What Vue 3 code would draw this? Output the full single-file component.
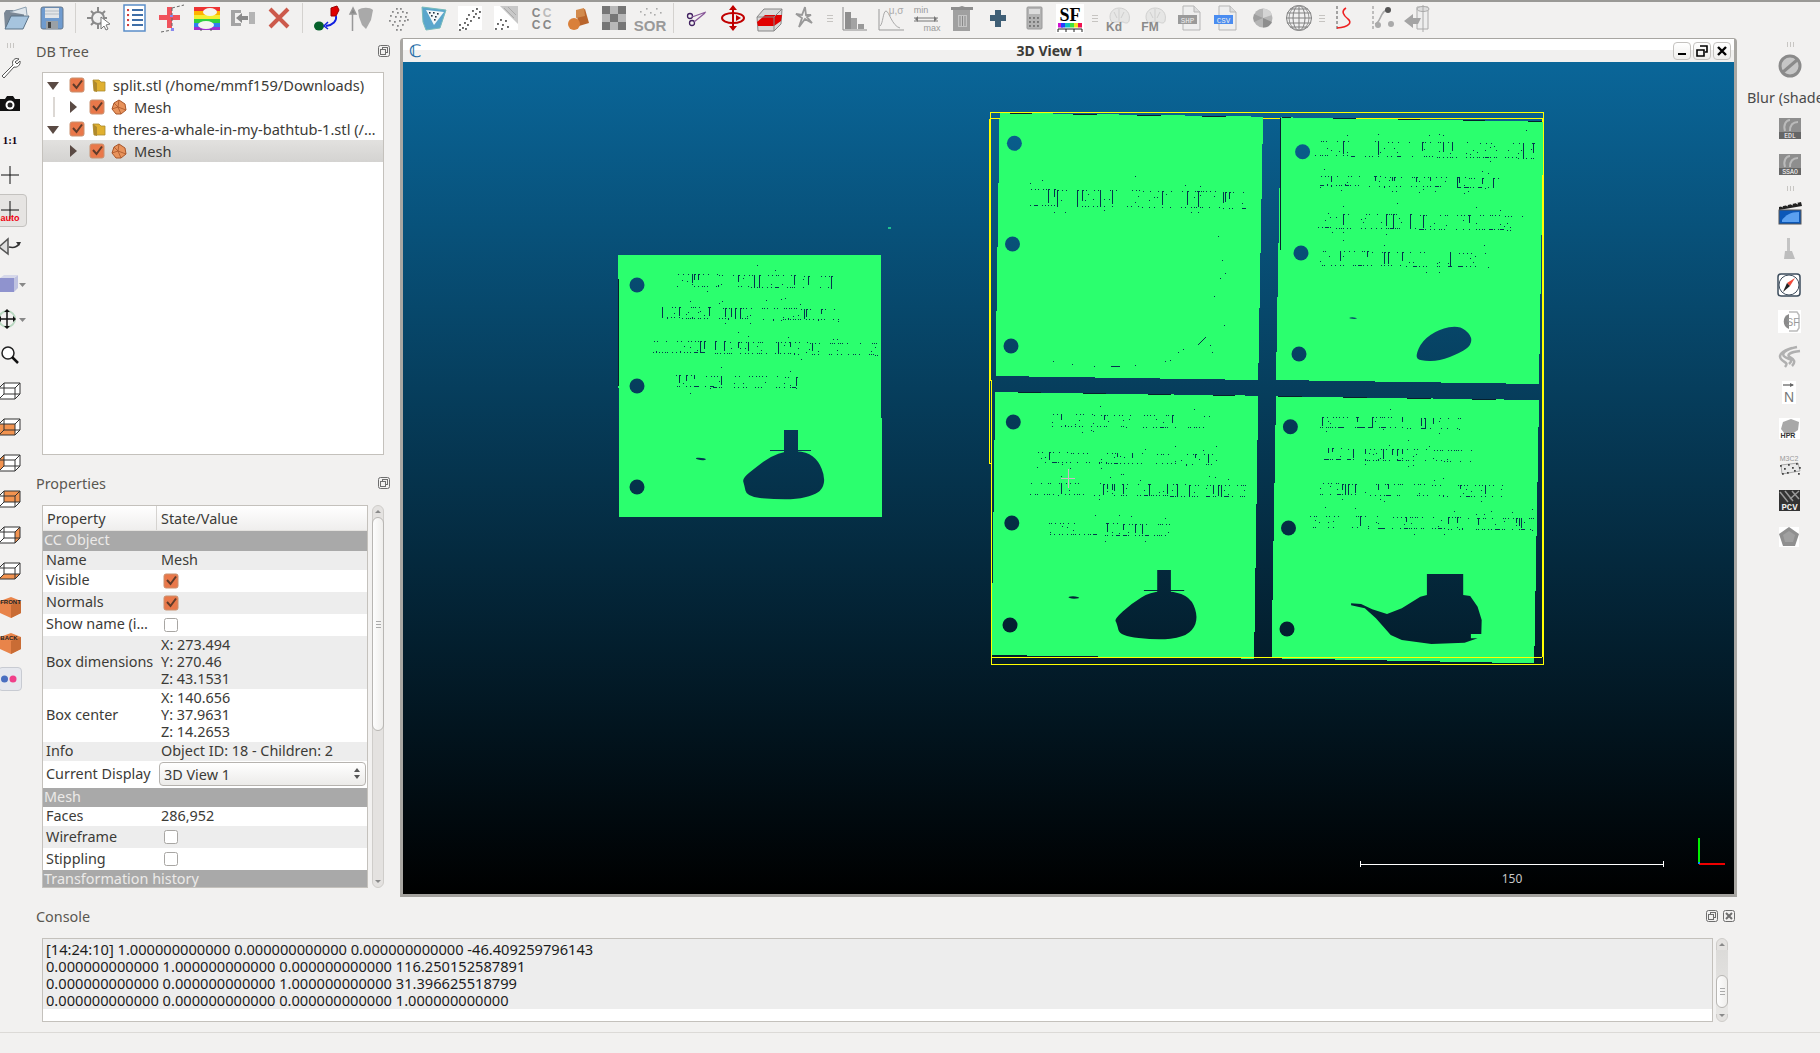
<script setup>
const g = '#8d8d8d'
const t = (x, y, s, c, txt, w = 700, f = 'Liberation Sans') =>
  `<text x="${x}" y="${y}" font-size="${s}" fill="${c}" font-weight="${w}" font-family="${f}" text-anchor="middle">${txt}</text>`
const dots = (arr, c = '#777', r = 1) => arr.map(([x, y]) => `<rect x="${x}" y="${y}" width="${r * 1.6}" height="${r * 1.6}" fill="${c}"/>`).join('')
const brain = `<path d="M6 17C3 11 7 4 14 4s12 5 10 13c-1 3-4 2-6 1H10c-2 1-3 1-4-1z" fill="#e6e6e5" stroke="#d0d0cf" stroke-width="1"/><path d="M14 5v12M9 8l3 6M19 8l-3 6" stroke="#cfcfce" fill="none"/>`
const doc = (label, bg) => `<path d="M6 2h11l6 6v18H6z" fill="#eeeeee" stroke="#b5b5b5"/><path d="M17 2v6h6" fill="#ddd" stroke="#b5b5b5"/><rect x="1" y="11" width="19" height="9" fill="${bg}"/>` + t(10.5, 18.5, 7.5, '#eee', label, 400, 'Liberation Mono')

const topGroups = [
  { sep: 'line', icons: [
    `<path d="M3 24L2 9l2-3h7l2 2h8l1 2v3z" fill="#7b8896"/><path d="M3 25l6-13h18l-6 13z" fill="#a6c4de" stroke="#5b7387"/><path d="M8 8L24 3l1 8" fill="#dfe6ec" stroke="#8da0b0"/>`,
    `<rect x="3" y="3" width="22" height="22" rx="2" fill="#6f9bcf" stroke="#66788c"/><rect x="7" y="4" width="14" height="10" fill="#e2e5e8"/><path d="M7 7h14M7 10h14" stroke="#b4bcc4"/><rect x="8" y="17" width="12" height="8" fill="#9aa0a6"/><rect x="10" y="18" width="3" height="6" fill="#444"/>`,
  ]},
  { sep: 'line', icons: [
    `<circle cx="13" cy="14" r="6" fill="#f0f0f0" stroke="#8a8a8a" stroke-width="2"/><path d="M13 3v6M13 19v6M2 14h6M18 14h4M6 7l3 3M20 7l-3 3M6 21l3-3" stroke="#8a8a8a" stroke-width="2"/><path d="M16 13l9 7-4 1 2 4-2 1-2-4-3 3z" fill="#fff" stroke="#777"/>`,
    `<rect x="3" y="1" width="21" height="26" fill="#fff" stroke="#5a8dc8" stroke-width="1.5"/><path d="M11 6h11M11 11h11M11 16h11M11 21h11" stroke="#3f6fa8" stroke-width="2"/>${dots([[6, 5], [6, 10], [6, 15], [6, 20]], '#d04040', 1.3)}`,
    `<path d="M10 3h5v8h8v5h-8v8h-5v-8H2v-5h8z" fill="#f0525c"/><path d="M15 4l12-3M15 4v24M4 28l11-2" stroke="#666" stroke-dasharray="3 2" fill="none"/><rect x="13" y="11" width="3" height="2" fill="#8888ee"/><rect x="14" y="24" width="3" height="3" fill="#8888ee"/>`,
    `<rect x="1" y="3" width="26" height="4" fill="#ee3333"/><rect x="1" y="7" width="26" height="4" fill="#ffb300"/><rect x="1" y="11" width="26" height="4" fill="#f4ee30"/><rect x="1" y="15" width="26" height="4" fill="#30d040"/><rect x="1" y="19" width="26" height="4" fill="#3080f0"/><rect x="1" y="23" width="26" height="3" fill="#a030d0"/><ellipse cx="17" cy="8" rx="7" ry="4" fill="#f4f4f0"/><ellipse cx="13" cy="21" rx="8" ry="4" fill="#f4f4f0"/><path d="M8 25v2M18 25v2" stroke="#555"/>`,
    `<path d="M2 6h10v3H6v10h6v3H2z" fill="#a4a4a4"/><path d="M7 14l6-5v3h6v4h-6v3z" fill="#8a8a8a"/><rect x="20" y="8" width="6" height="12" fill="#b4b4b4"/>`,
    `<path d="M5 5l18 18M23 5L5 23" stroke="#cc5a4c" stroke-width="4"/>`,
  ]},
  { sep: 'line', icons: [
    `<path d="M19 4l6-2 2 4-3 6h-5z" fill="#e00000" stroke="#900"/><ellipse cx="7" cy="22" rx="5" ry="4.5" fill="#05602a"/><path d="M24 12c1 5-3 9-10 10" stroke="#1020e0" stroke-width="1.8" fill="none"/><path d="M16 18l-4 4 4 3" stroke="#1020e0" stroke-width="1.5" fill="none"/>`,
    `<path d="M5 4l-3 6h6zM4.500 9v18" stroke="#999" fill="#888" stroke-width="1.500"/><path d="M10 6c4-3 12-3 15 0l-2 10-5 9-4-4-3-8z" fill="#a9a9a9"/>`,
    dots([[12, 4], [16, 4], [8, 7], [13, 8], [18, 7], [22, 8], [6, 11], [11, 12], [16, 12], [21, 12], [5, 16], [10, 17], [15, 16], [20, 16], [23, 15], [8, 20], [13, 21], [18, 20], [12, 25], [16, 25]], '#888', 1.1),
    `<path d="M2 3l24 3-6 18-14 2-3-8z" fill="#5aa6cc" stroke="#7bb"/><path d="M6 6l18 2-10 13z" fill="#f2f6f8"/>` + dots([[9, 8], [13, 8], [17, 9], [11, 11], [15, 12], [14, 15]], '#234', 1),
    `<rect x="2" y="2" width="24" height="24" fill="#fff"/>` + dots([[20, 4], [16, 6], [23, 7], [19, 9], [12, 10], [17, 12], [22, 13], [10, 14], [14, 16], [8, 18], [3, 20], [11, 20], [6, 23], [3, 25], [9, 24]], '#666', 1.2),
    `<rect x="2" y="2" width="24" height="24" fill="#fff"/><path d="M8 2h18v18z" fill="#c8c8c8"/><path d="M12 4l10 10M16 3l8 8" stroke="#aaa"/>` + dots([[8, 15], [13, 16], [5, 19], [10, 20], [3, 24], [9, 24], [15, 22]], '#666', 1.2),
    `<text x="8" y="13" font-size="12" font-weight="700" fill="#888" text-anchor="middle" font-family="Liberation Sans">C</text><text x="19" y="13" font-size="12" font-weight="700" fill="#bbb" text-anchor="middle" font-family="Liberation Sans">C</text>` + t(8, 25, 12, '#888', 'C') + t(19, 25, 12, '#888', 'C'),
    `<path d="M12 8l9-3 4 14-10 3z" fill="#b9652c"/><circle cx="10" cy="20" r="6" fill="#d9803a"/><path d="M12 6l8-2 1 8-9 2z" fill="#d28a4c"/>`,
    `<rect x="2" y="2" width="24" height="24" fill="#b8b8b8"/><rect x="2" y="2" width="8" height="8" fill="#767676"/><rect x="18" y="2" width="8" height="8" fill="#767676"/><rect x="10" y="10" width="8" height="8" fill="#767676"/><rect x="2" y="18" width="8" height="8" fill="#767676"/><rect x="18" y="18" width="8" height="8" fill="#767676"/>`,
    t(14, 27, 15, '#999', 'SOR') + dots([[4, 7], [10, 4], [14, 8], [20, 4], [24, 8], [8, 10], [18, 10]], '#aaa', 1),
  ]},
  { sep: 'hnd', icons: [
    `<circle cx="7" cy="12" r="2.500" fill="none" stroke="#402060" stroke-width="1.300"/><circle cx="9" cy="19" r="2.500" fill="none" stroke="#402060" stroke-width="1.300"/><path d="M9 13l14-5M11 18l11-9" stroke="#8a5a9a" stroke-width="1.300"/>`,
    `<path d="M14 2v24" stroke="#c00000" stroke-width="2"/><path d="M14 1l-4 5h8zM14 27l-4-5h8z" fill="#c00000"/><ellipse cx="14" cy="14" rx="11" ry="5" fill="none" stroke="#c00000" stroke-width="2"/><path d="M17 11l5 3-5 3z" fill="#c00000"/>`,
    `<path d="M2 13l7-8h18l-1 15-7 7H3z" fill="#d8d8d8" stroke="#888"/><path d="M2 18l8-7h17l-1 6-7 5H3z" fill="#e10000"/><path d="M19 27V13H2M19 13l8-8" stroke="#888" fill="none"/>`,
    `<path d="M14 3l-3 8 -6-1 6 4-3 9 6-8 7 4-5-6 4-2h-5z" fill="none" stroke="#999" stroke-width="1.800"/>`,
  ]},
  { sep: 'hnd2', icons: [
    `<path d="M3 3v23h24" stroke="#8a8a8a" fill="none"/><rect x="5" y="8" width="6" height="17" fill="#8f8f8f"/><rect x="11" y="14" width="6" height="11" fill="#a3a3a3"/><rect x="18" y="20" width="6" height="5" fill="#999"/>`,
    `<path d="M3 5v21h25" stroke="#999" fill="none"/><path d="M4 22c3-2 3-15 6-15s6 15 14 17" stroke="#aaa" fill="none"/><text x="20" y="10" font-size="10" fill="#aaa" text-anchor="middle" font-family="Liberation Sans">μ,σ</text>`,
    `<text x="9" y="9" font-size="9" fill="#999" text-anchor="middle" font-family="Liberation Sans">min</text><path d="M2 14h24M2 17h24" stroke="#777"/><path d="M6 12l-3 3 3 3zM22 12l3 3-3 3z" fill="#777"/><text x="20" y="27" font-size="9" fill="#999" text-anchor="middle" font-family="Liberation Sans">max</text>`,
    `<path d="M5 6h17v21H5z" fill="#a0a0a0"/><path d="M3 3h8l3-1 3 1h8v3H3z" fill="#8e8e8e"/><rect x="10" y="11" width="9" height="12" fill="#c4c4c4"/><path d="M12 12v10M14.500 12v10M17 12v10" stroke="#888"/>`,
    `<path d="M11 6h6v5h5v6h-5v6h-6v-6H6v-6h5z" fill="#3f5f76"/>`,
    `<rect x="7" y="3" width="15" height="22" rx="1" fill="#b3b3b3" stroke="#999"/><rect x="9" y="5" width="11" height="5" fill="#dcdcdc"/>` + dots([[9, 13], [13, 13], [17, 13], [9, 17], [13, 17], [17, 17], [9, 21], [13, 21], [17, 21]], '#777', 1.200),
    `<rect x="0" y="0" width="28" height="29" fill="#fff"/><text x="14" y="17" font-size="18" font-weight="700" fill="#000" text-anchor="middle" font-family="Liberation Serif">SF</text><rect x="2" y="19" width="5" height="4.500" fill="#d010d0"/><rect x="5" y="19" width="4" height="4.500" fill="#2040ff"/><rect x="9" y="19" width="5" height="4.500" fill="#10c0c0"/><rect x="14" y="19" width="4" height="4.500" fill="#40e040"/><rect x="18" y="19" width="4" height="4.500" fill="#f0e020"/><rect x="22" y="19" width="4" height="4.500" fill="#f01050"/><path d="M2 28v-3h24v3M10 25v3M18 25v3" stroke="#222" fill="none"/>`,
  ]},
  { sep: 'hnd3', icons: [
    brain + t(9, 27, 12, '#8a8a8a', 'Kd'),
    brain + t(9, 27, 12, '#8a8a8a', 'FM'),
    doc('SHP', '#9a9a9a'),
    doc('CSV', '#4a8cf0'),
    `<circle cx="14" cy="14" r="9.500" fill="#b5b5b5"/><path d="M14 14L14 4.500A9.500 9.500 0 0 1 23 11z" fill="#d4d4d4"/><path d="M14 14L23 18A9.500 9.500 0 0 1 14 23.500z" fill="#8e8e8e"/><path d="M14 14L5 10A9.500 9.500 0 0 0 5 18z" fill="#9e9e9e"/>`,
    `<circle cx="14" cy="14" r="12.500" fill="#f0f0f0" stroke="#808080"/><ellipse cx="14" cy="14" rx="6" ry="12.500" fill="none" stroke="#808080"/><ellipse cx="14" cy="14" rx="10" ry="12.500" fill="none" stroke="#999"/><path d="M14 1.500v25M2 9h24M1.500 14h25M2 19h24M5 5h18M5 23h18" stroke="#808080" fill="none"/>`,
  ]},
  { sep: '', icons: [
    `<path d="M6 2v25" stroke="#555" stroke-dasharray="3 2"/><path d="M15 4c-5 3-3 7 2 11 4 3 2 8-11 9" stroke="#ee2020" stroke-width="1.600" fill="none"/>`,
    `<path d="M6 2v25" stroke="#888" stroke-dasharray="3 2"/><path d="M8 20c6-1 5-14 14-15" stroke="#aaa" stroke-width="1.500" fill="none"/><circle cx="21" cy="6" r="3" fill="#555"/><circle cx="11" cy="21" r="3" fill="#aaa"/><circle cx="24" cy="20" r="3" fill="#aaa"/>`,
    `<path d="M14 3h11v22H14z" fill="#eee" stroke="#aaa"/><ellipse cx="20" cy="5" rx="6" ry="2.500" fill="#ddd" stroke="#aaa"/><path d="M20 1v27" stroke="#aaa"/><path d="M1 17l9-7v4h8l-3 6h-5v4z" fill="#a4a4a4"/>`,
  ]},
]

const cube = (face) => `<path d="M1 9l5-5h16v11l-5 5H1z" fill="#fff"/>${face}<path d="M1 9h16v11H1zM1 9l5-5h16v11l-5 5M17 9l5-5M1 20l5-5h16M6 4v11" fill="none" stroke="#333" stroke-width="1"/>`
const orange = '#f29350'
const leftIcons = [
  `<path d="M4 21l11-11c-2-4 2-8 6-6l-4 3 2 2 3-3c1 4-3 7-6 6L6 23z" fill="#fff" stroke="#555"/>`,
  `<path d="M2 8h5l2-3h6l2 3h5v12H2z" fill="#111"/><circle cx="12" cy="14" r="4.500" fill="#fff"/><circle cx="12" cy="14" r="2.500" fill="#222"/>`,
  `<text x="12" y="17" font-size="11" font-weight="700" fill="#101" text-anchor="middle" font-family="Liberation Serif">1:1</text>`,
  `<path d="M12 3v18M3 12h18" stroke="#111"/>`,
  `<path d="M12 2v18M3 11h18" stroke="#111"/>` + `<text x="12" y="22" font-size="9" font-weight="700" fill="#f00010" text-anchor="middle" font-family="Liberation Sans">auto</text>`,
  `<path d="M10 4v15L1 12z" fill="#ddd" stroke="#555" stroke-width="1.500"/><path d="M11 12c4 1 8 0 10-3" stroke="#333" stroke-width="1.500" fill="none"/><path d="M18 7l5 0-2 4z" fill="#333"/>`,
  `<path d="M2 7h14v14H2z" fill="#8f93ce"/><path d="M16 7l4-3v13l-4 4z" fill="#bfc2e0"/><path d="M2 7l4-3h14l-4 3z" fill="#d6d8ea"/><path d="M21 12h7l-3.500 4z" fill="#888"/>`,
  `<circle cx="9" cy="12" r="8" fill="none" stroke="#b8d8c0" stroke-width="2"/><path d="M9 3v18M1 12h16" stroke="#111" stroke-width="1.500"/><path d="M9 2l-3 3h6zM9 22l-3-3h6zM0 12l3-3v6zM18 12l-3-3v6z" fill="#111"/><path d="M21 11h7l-3.500 4z" fill="#888"/>`,
  `<circle cx="10" cy="10" r="6" fill="#fff" stroke="#222" stroke-width="1.500"/><path d="M14 14l6 6" stroke="#111" stroke-width="2.500"/>`,
  cube(''),
  cube(`<rect x="1" y="9" width="16" height="11" fill="${orange}"/>`),
  cube(`<path d="M1 9l5-5v11l-5 5z" fill="${orange}"/>`),
  cube(`<rect x="6" y="4" width="16" height="11" fill="${orange}"/>`),
  cube(`<path d="M17 9l5-5v11l-5 5z" fill="${orange}"/>`),
  cube(`<path d="M1 20l5-5h16l-5 5z" fill="${orange}"/>`),
  `<path d="M2 6l11-4 10 4v12l-10 5-11-5z" fill="#e8844a"/><path d="M13 10v13l10-5V6z" fill="#c96c35"/><text x="12.500" y="9" font-size="6" font-weight="700" fill="#222" text-anchor="middle" font-family="Liberation Sans">FRONT</text>`,
  `<path d="M2 6l11-4 10 4v12l-10 5-11-5z" fill="#e8844a"/><path d="M13 10v13l10-5V6z" fill="#c96c35"/><text x="11" y="9" font-size="6" font-weight="700" fill="#222" text-anchor="middle" font-family="Liberation Sans">BACK</text>`,
  `<circle cx="6.500" cy="12" r="3.500" fill="#4a6fc0"/><circle cx="15" cy="12" r="3.500" fill="#f0408a"/>`,
]

const shaderTile = (label, c = '#fff', bg = '#8e8e8e') => `<rect x="2" y="1" width="22" height="21" fill="${bg}"/><path d="M8 14C6 8 9 3 13 3M13 14c0-6 3-9 8-9" stroke="#bbb" stroke-width="2" fill="none"/><rect x="2" y="15" width="22" height="7" fill="#666"/><text x="13" y="21" font-size="6.500" fill="${c}" text-anchor="middle" font-family="Liberation Mono">${label}</text>`
const rightIcons = [
  { cls: 'rtop', svg: `<circle cx="13" cy="12" r="10" fill="#c6c6c6" stroke="#8a8a8a" stroke-width="3"/><path d="M6 18L20 6" stroke="#8a8a8a" stroke-width="3"/>` },
  { text: 'Blur (shader)' },
  { svg: shaderTile('EDL') },
  { svg: shaderTile('SSAO') },
  { hnd: true },
  { svg: `<path d="M2 6l22-5 1 4L2 9z" fill="#222"/><path d="M4 5l2 1M9 4l2 1M14 3l2 1M19 2l2 1" stroke="#eee"/><rect x="2" y="9" width="22" height="14" fill="#0c58b8"/><path d="M5 19c4-5 8-8 17-8v10H5z" fill="#5aa0f0"/><rect x="2" y="9" width="22" height="14" fill="none" stroke="#555"/>` },
  { svg: `<rect x="10" y="1" width="3" height="14" fill="#c4c4c4"/><path d="M8 14h7l3 8H7z" fill="#bdbdbd"/>` },
  { svg: `<rect x="1" y="1" width="22" height="22" rx="3" fill="#fff" stroke="#3c4c5c" stroke-width="1.500"/><circle cx="12" cy="12" r="10" fill="#fff" stroke="#3c4c5c"/><path d="M18 5l-5 8-3-3z" fill="#f04a3a"/><path d="M6 19l4-9 3 3z" fill="#222"/>` },
  { svg: `<rect x="1" y="1" width="23" height="23" fill="#fff"/><path d="M12 5a8 8 0 0 0 0 15z" fill="#8a8a8a"/><path d="M12 3h8l2 3v13l-2 3h-8" fill="none" stroke="#bbb" stroke-width="1.500"/><text x="16" y="17" font-size="10" fill="#999" text-anchor="middle" font-family="Liberation Sans">SF</text>` },
  { svg: `<path d="M20 2C9 4 3 9 8 12s9 2 4 7M23 6C13 7 9 10 13 12s6 5 2 9M15 3C5 6 1 10 4 14s8 3 4 8" fill="none" stroke="#b0b0b0" stroke-width="2.500"/>` },
  { svg: `<rect x="5" y="0" width="14" height="23" fill="#fff"/><path d="M6 4h10" stroke="#666" stroke-width="1.300"/><path d="M13 2l4 2-4 2z" fill="#666"/><text x="12" y="21" font-size="14" fill="#777" text-anchor="middle" font-family="Liberation Sans">N</text>` },
  { svg: `<rect x="2" y="1" width="21" height="21" fill="#fff"/><path d="M6 5l8-3 8 3-1 8-6 4H8l-4-5z" fill="#a8a8a8"/><text x="11" y="21" font-size="7" font-weight="700" fill="#333" text-anchor="middle" font-family="Liberation Sans">HPR</text>` },
  { svg: `<text x="12" y="8" font-size="7" fill="#999" text-anchor="middle" font-family="Liberation Sans">M3C2</text><path d="M4 12l17-2 2 8-18 3z" fill="#e8e8e8" stroke="#aaa"/>` + dots([[3, 12], [7, 15], [11, 11], [15, 14], [19, 10], [22, 14], [5, 20], [10, 19], [17, 17], [21, 20]], '#444', 1.1) },
  { svg: `<rect x="2" y="1" width="21" height="21" fill="#333"/><path d="M3 3l8 10M8 2l8 10M15 2l7 8M22 2l-9 8" stroke="#999" stroke-width="1.500"/><text x="12.500" y="21" font-size="9" font-weight="700" fill="#eee" text-anchor="middle" font-family="Liberation Mono">PCV</text>` },
  { svg: `<rect x="2" y="2" width="20" height="20" fill="#fff"/><path d="M12 2l10 7-4 12H6L2 9z" fill="#8f8f8f"/><path d="M12 6l6 4-2 7H8l-2-7z" fill="#a0a0a0"/>` },
]

const rows = [
  { s: 'CC Object' },
  { k: 'Name', v: 'Mesh', h: 'h19', alt: 1 },
  { k: 'Visible', c: 1, h: 'h22' },
  { k: 'Normals', c: 1, h: 'h22', alt: 1 },
  { k: 'Show name (i…', c: 0, h: 'h22' },
  { k: 'Box dimensions', m: ['X: 273.494', 'Y: 270.46', 'Z: 43.1531'], h: 'h53', alt: 1 },
  { k: 'Box center', m: ['X: 140.656', 'Y: 37.9631', 'Z: 14.2653'], h: 'h53' },
  { k: 'Info', v: 'Object ID: 18 - Children: 2', h: 'h19', alt: 1 },
  { k: 'Current Display', combo: '3D View 1', h: 'h27' },
  { s: 'Mesh' },
  { k: 'Faces', v: '286,952', h: 'h19' },
  { k: 'Wireframe', c: 0, h: 'h22', alt: 1 },
  { k: 'Stippling', c: 0, h: 'h22' },
  { s: 'Transformation history' },
]

const tree = [
  { label: 'split.stl (/home/mmf159/Downloads)', lvl: 0 },
  { label: 'Mesh', lvl: 1, bar: true },
  { label: 'theres-a-whale-in-my-bathtub-1.stl (/…', lvl: 0 },
  { label: 'Mesh', lvl: 1, sel: true },
]

const consoleLines = [
  '[14:24:10] 1.000000000000 0.000000000000 0.000000000000 -46.409259796143',
  '0.000000000000 1.000000000000 0.000000000000 116.250152587891',
  '0.000000000000 0.000000000000 1.000000000000 31.396625518799',
  '0.000000000000 0.000000000000 0.000000000000 1.000000000000',
]

/* --- 3D view geometry, in screen pixels --- */
const pts = (a) => a.map((p) => p.join(',')).join(' ')
const z5 = ([x, y]) => [+(980 + x / 2.703).toFixed(1), +(100 + y / 3).toFixed(1)]
const z6 = ([x, y]) => [+(980 + x / 2.703).toFixed(1), +(380 + y / 3).toFixed(1)]
const z4 = ([x, y]) => [+(600 + x / 3).toFixed(1), +(240 + y / 3).toFixed(1)]

const panels = [
  pts([[618, 255], [881, 255], [881, 418], [882, 418], [882, 517], [619, 517]]),
  pts([[53, 38], [765, 50], [752, 840], [42, 828]].map(z5)),
  pts([[813, 52], [1523, 65], [1511, 852], [800, 840]].map(z5)),
  pts([[41, 36], [752, 47], [741, 836], [31, 825]].map(z6)),
  pts([[800, 49], [1511, 60], [1498, 850], [788, 835]].map(z6)),
]
const holes = [
  [637, 285], [637, 386], [637, 487],
  [1014.4, 143.3], [1012.5, 244], [1011, 346],
  [1302.6, 151.7], [1301, 253], [1299, 354],
  [1013.3, 422], [1011.8, 523], [1010, 625],
  [1290.4, 426.7], [1288.5, 528], [1287, 629],
]
const smooth = (a) => {
  const m = (p, q) => [(p[0] + q[0]) / 2, (p[1] + q[1]) / 2]
  let d = 'M' + m(a[a.length - 1], a[0]).join(' ')
  a.forEach((p, i) => {
    const e = m(p, a[(i + 1) % a.length])
    d += `Q${p[0]} ${p[1]} ${e[0]} ${e[1]}`
  })
  return d + 'Z'
}
const rect = (x0, y0, x1, y1) => `M${x0} ${y0}H${x1}V${y1}H${x0}Z`
const c4 = (x0, y0, x1, y1, f) => {
  const a = f([x0, y0]); const b = f([x1, y1])
  return rect(a[0], a[1], b[0], b[1])
}
const shapes = [
  smooth([[427, 715], [470, 680], [510, 650], [560, 632], [620, 636], [655, 662], [675, 710], [668, 748], [640, 765], [590, 778], [520, 778], [440, 770], [433, 735]].map(z4)),
  c4(552, 570, 594, 640, z4), c4(510, 630, 633, 633, z4),
  smooth([[363, 717], [410, 670], [460, 636], [520, 632], [568, 652], [587, 700], [582, 742], [550, 772], [480, 780], [378, 768], [370, 730]].map(z6)),
  c4(479, 570, 516, 640, z6), c4(443, 630, 552, 633, z6),
  'M' + [[1003, 670], [1030, 672], [1060, 688], [1100, 702], [1140, 685], [1190, 650], [1208, 645], [1208, 582], [1306, 582], [1306, 645], [1325, 648], [1345, 680], [1356, 720], [1355, 762], [1327, 762], [1327, 775], [1345, 775], [1310, 788], [1220, 792], [1140, 780], [1110, 765], [1070, 715], [1040, 685], [1003, 676]].map((p) => z6(p).join(' ')).join('L') + 'Z',
  smooth([[1176, 770], [1195, 722], [1240, 688], [1295, 676], [1328, 705], [1328, 735], [1300, 758], [1240, 784], [1190, 782]].map(z5)),
  smooth([[283, 655], [300, 652], [323, 658], [305, 662]].map(z4)),
  smooth([[235, 651], [255, 648], [273, 654], [250, 657]].map(z6)),
  smooth([[995, 654], [1008, 651], [1022, 656], [1008, 657]].map(z5)),
]

const textLines = [
  [677, 833, 263, 292], [662, 843, 297, 323], [653, 878, 330, 358], [675, 797, 365, 392],
  [1030, 1244, 174, 214],
  [1315, 1537, 127, 163], [1320, 1498, 167, 190], [1318, 1522, 200, 235], [1320, 1489, 238, 272],
  [1052, 1209, 403, 432], [1037, 1219, 443, 467], [1030, 1254, 472, 500], [1048, 1170, 512, 540],
  [1320, 1461, 407, 432], [1324, 1472, 438, 465], [1320, 1505, 473, 500], [1309, 1533, 505, 533],
]
const textPath = (() => {
  let s = 1234567
  const r = () => (s = (s * 16807) % 2147483647) / 2147483647
  let d = ''
  const px = (x, y, w = 1, h = 1) => { d += `M${Math.round(x)} ${Math.round(y)}h${w}v${h}h${-w}z` }
  for (const [x0, x1, y0, y1] of textLines) {
    const h = y1 - y0
    const mid = y0 + h * 0.38
    const base = y0 + h * 0.78
    let x = x0
    let word = 0
    while (x < x1) {
      const slope = (x - x0) * 0.012
      if (r() < 0.72) px(x, base + slope)
      if (r() < 0.62) px(x + 1, mid + slope)
      if (r() < 0.3) px(x, mid + 3 + r() * 9 + slope)
      if (r() < 0.16) px(x, mid + slope, 1, Math.round((base - mid) * (0.4 + r() * 0.7)))
      if (r() < 0.06) px(x, base + slope, 4, 1)
      if (r() < 0.1) px(x, y0 + r() * h * 0.25 + slope)
      if (r() < 0.05) px(x, base + 4 + r() * 3 + slope)
      x += 2 + Math.floor(r() * 3.5)
      word += 1
      if (word > 9 && r() < 0.2) { x += 7; word = 0 }
    }
  }
  ;[[1214, 296], [1225, 273], [1220, 278], [1222, 260], [1218, 236], [1224, 325], [1212, 352], [1210, 345], [1183, 349], [1178, 352], [1170, 360], [1165, 361], [1135, 365], [1094, 366], [1072, 364], [1053, 361]].forEach(([x, y]) => px(x, y))
  px(1111, 366, 9, 1)
  return d
})()

const ticks = [
  ...[[80, 40, 140], [250, 43, 315], [425, 46, 490], [600, 49, 665]].map(([a, y, b]) => [z5([a, y]), z5([b, y])]),
  ...[[815, 53, 840], [955, 55, 1015], [1130, 58, 1190], [1305, 61, 1365], [1480, 64, 1520]].map(([a, y, b]) => [z5([a, y]), z5([b, y])]),
  ...[[103, 38, 165], [278, 40, 340], [455, 43, 515], [630, 46, 690]].map(([a, y, b]) => [z6([a, y]), z6([b, y])]),
  ...[[805, 49, 870], [980, 52, 1045], [1155, 55, 1220], [1330, 58, 1395]].map(([a, y, b]) => [z6([a, y]), z6([b, y])]),
].map(([a, b]) => `M${a[0]} ${a[1]}H${b[0]}`).join('') + 'M618 279V386M1280.500 118V250'
</script>

<template>
  <div class="app">
    <svg class="defs" width="0" height="0" aria-hidden="true">
      <symbol id="chk" viewBox="0 0 16 16">
        <rect x="1" y="1" width="14" height="14" rx="2" fill="#e9784a" stroke="#c9906f" />
        <path d="M4 7l3.500 4L13 3.500" fill="none" stroke="#5f3b2a" stroke-width="2" />
      </symbol>
      <symbol id="unchk" viewBox="0 0 16 16">
        <rect x="1.500" y="1.500" width="13" height="13" rx="2" fill="#fff" stroke="#a8a6a3" />
      </symbol>
      <symbol id="float" viewBox="0 0 12 12">
        <rect x=".5" y=".5" width="11" height="11" rx="2" fill="none" stroke="#6e6e6e" />
        <rect x="4.500" y="2.500" width="5" height="5" fill="none" stroke="#6e6e6e" />
        <rect x="2.500" y="4.500" width="5" height="5" fill="#f2f1f0" stroke="#6e6e6e" />
      </symbol>
      <symbol id="meshi" viewBox="0 0 16 16">
        <path d="M8 1l6 4 1 6-5 4H5L1 10l2-6z" fill="#e8935c" stroke="#a8562a" />
        <path d="M8 1l-1 7-6 2M7 8l3 7M7 8l8 3M7 8l-4-4" stroke="#a8562a" fill="none" stroke-width=".8" />
      </symbol>
      <symbol id="foldr" viewBox="0 0 16 16">
        <path d="M2 3h6l2 2h4v9H3z" fill="#e0b030" stroke="#a88a30" stroke-width=".8" />
        <path d="M2 3l4 3v9l-3-1z" fill="#b08a2c" />
      </symbol>
    </svg>

    <header class="toolbar">
      <template v-for="(grp, gi) in topGroups" :key="gi">
        <span v-for="(ic, ii) in grp.icons" :key="ii" class="tbtn">
          <svg class="ic" viewBox="0 0 28 28" v-html="ic"></svg>
        </span>
        <span v-if="grp.sep === 'line'" class="sep"><i></i></span>
        <span v-else-if="grp.sep" :class="['grip', grp.sep]"><i></i><i></i><i></i></span>
      </template>
    </header>

    <section class="main">
      <aside class="ltb">
        <span class="hgrip"><i></i><i></i><i></i></span>
        <span v-for="(ic, i) in leftIcons" :key="i" :class="['lbtn', { pressed: i === 4 }, { flick: i === 17 }]">
          <svg class="lic" viewBox="0 0 24 24" v-html="ic"></svg>
        </span>
      </aside>

      <div class="docks">
        <div class="dhead dh1">
          <span>DB Tree</span>
          <svg class="fl"><use href="#float" /></svg>
        </div>
        <div class="tree">
          <div v-for="(n, i) in tree" :key="i" :class="['trow', 'l' + n.lvl, { sel: n.sel }]">
            <span v-if="n.bar" class="tbar"></span>
            <span :class="n.lvl ? 'arr-r' : 'arr-d'"></span>
            <svg class="tck"><use href="#chk" /></svg>
            <svg class="tic"><use :href="n.lvl ? '#meshi' : '#foldr'" /></svg>
            <span class="tlabel">{{ n.label }}</span>
          </div>
        </div>

        <div class="dhead dh2">
          <span>Properties</span>
          <svg class="fl"><use href="#float" /></svg>
        </div>
        <div class="propwrap">
          <div class="table">
            <div class="thead"><span class="th1">Property</span><span class="th2">State/Value</span></div>
            <template v-for="(r, i) in rows" :key="i">
              <div v-if="r.s" class="section">{{ r.s }}</div>
              <div v-else :class="['prow', r.h, { alt: r.alt }]">
                <span class="pk">{{ r.k }}</span>
                <span class="pv">
                  <template v-if="r.v">{{ r.v }}</template>
                  <svg v-else-if="r.c !== undefined" class="pck"><use :href="r.c ? '#chk' : '#unchk'" /></svg>
                  <span v-else-if="r.m" class="multi"><span v-for="l in r.m" :key="l">{{ l }}</span></span>
                  <span v-else class="combo">{{ r.combo }}<i class="spin"></i></span>
                </span>
              </div>
            </template>
          </div>
          <div class="sbar tall">
            <i class="up"></i>
            <div class="thumb th-p"><b></b><b></b><b></b></div>
            <i class="dn"></i>
          </div>
        </div>
      </div>

      <div class="win">
        <div class="wtitle">
          <span class="cc">ℂ</span>
          <span class="wname">3D View 1</span>
          <span class="wb"><svg viewBox="0 0 16 16"><path d="M4 11h8" stroke="#000" stroke-width="2" /></svg></span>
          <span class="wb"><svg viewBox="0 0 16 16"><path d="M6 3h7v6h-2M3 7h7v6H3z" fill="none" stroke="#000" stroke-width="1.600" /></svg></span>
          <span class="wb"><svg viewBox="0 0 16 16"><path d="M4 4l8 8M12 4l-8 8" stroke="#000" stroke-width="2.400" /></svg></span>
        </div>
        <div class="gl">
          <svg class="scene" viewBox="403 62 1331 832" width="1331" height="832">
            <defs>
              <linearGradient id="bg" gradientUnits="userSpaceOnUse" x1="0" y1="62" x2="0" y2="894">
                <stop offset="0" stop-color="#0a6699" />
                <stop offset="1" stop-color="#000" />
              </linearGradient>
            </defs>
            <path d="M989.500 118.500H1542V657M989.500 118.500V463H991" fill="none" stroke="#ffff00" shape-rendering="crispEdges" />
            <polygon v-for="(p, i) in panels" :key="i" :points="p" fill="#2bff6e" shape-rendering="crispEdges" />
            <circle v-for="(h, i) in holes" :key="'h' + i" :cx="h[0]" :cy="h[1]" r="7.500" fill="url(#bg)" />
            <path v-for="(s, i) in shapes" :key="'s' + i" :d="s" fill="url(#bg)" />
            <path :d="textPath" fill="#04344e" shape-rendering="crispEdges" />
            <path d="M1198 345L1206 337" stroke="#063048" fill="none" />
            <path :d="ticks" stroke="#06202c" fill="none" shape-rendering="crispEdges" />
            <path d="M1061 478.500h14M1068 469v19" stroke="#cdb9c6" fill="none" shape-rendering="crispEdges" />
            <rect x="888" y="227" width="3" height="2" fill="#1fc090" />
            <path d="M990.500 112.500H1543.500V664H991.500V380H990.500Z M991 657.500H1542" fill="none" stroke="#ffff00" shape-rendering="crispEdges" />
            <path d="M1360.500 864h303M1360.500 861v6M1663.500 861v6" stroke="#fff" fill="none" shape-rendering="crispEdges" />
            <text x="1512" y="883" class="scale">150</text>
            <path d="M1699 864V838" stroke="#00ee00" stroke-width="2" />
            <path d="M1699 864H1725" stroke="#ee0000" stroke-width="2" />
            <rect x="1698" y="862" width="2" height="2" fill="#0090ff" />
          </svg>
        </div>
      </div>

      <aside class="rtb">
        <span class="hgrip"><i></i><i></i><i></i></span>
        <template v-for="(it, i) in rightIcons" :key="i">
          <span v-if="it.hnd" class="hgrip rh"><i></i><i></i><i></i></span>
          <span v-else-if="it.text" class="blur">{{ it.text }}</span>
          <span v-else class="rbtn"><svg class="ric" viewBox="0 0 26 24" v-html="it.svg"></svg></span>
        </template>
      </aside>
    </section>

    <section class="console">
      <div class="dhead chead">
        <span>Console</span>
        <span class="cbtns">
          <svg class="fl"><use href="#float" /></svg>
          <svg class="fl" viewBox="0 0 12 12"><rect x=".5" y=".5" width="11" height="11" rx="2" fill="none" stroke="#6e6e6e" /><path d="M3 3l6 6M9 3l-6 6" stroke="#6e6e6e" stroke-width="2" /></svg>
        </span>
      </div>
      <div class="cbody">
        <div class="clog">
          <div class="citem"><div v-for="l in consoleLines" :key="l">{{ l }}</div></div>
        </div>
        <div class="sbar short">
          <i class="up"></i>
          <div class="track"><div class="thumb th-c"><b></b><b></b><b></b></div></div>
          <i class="dn"></i>
        </div>
      </div>
    </section>
    <footer class="status"></footer>
  </div>
</template>

<style>
html, body { margin: 0; background: #f2f1f0; }
</style>

<style scoped>
.app {
  width: 1820px;
  height: 1053px;
  overflow: hidden;
  display: flex;
  flex-direction: column;
  background: #f2f1f0;
  color: #3c3b37;
  font-family: "Noto Sans", "Open Sans", sans-serif;
  font-size: 14.4px;
  position: relative;
}
.defs { position: absolute; }

.toolbar {
  height: 38px;
  flex: none;
  display: flex;
  align-items: flex-start;
  margin-left: -2px;
  border-top: 2px solid #9a9996;
  box-sizing: border-box;
}
.tbtn { width: 36px; height: 32px; flex: none; display: flex; align-items: center; justify-content: center; }
.ic { width: 28px; height: 28px; overflow: visible; }
.sep { width: 11px; height: 30px; flex: none; display: flex; justify-content: center; margin-top: 1px; }
.sep i { width: 1px; height: 100%; background: #d4d2cf; }
.grip { height: 32px; flex: none; display: flex; flex-direction: column; gap: 2px; align-items: center; justify-content: center; }
.grip i { width: 6px; height: 1px; background: #c6c4c1; display: block; }
.hnd { width: 13px; }
.hnd2 { width: 13px; }
.hnd3 { width: 10px; }

.main { height: 859px; flex: none; display: flex; }

.ltb { width: 32px; flex: none; display: flex; flex-direction: column; padding-top: 4px; box-sizing: border-box; }
.hgrip { height: 7px; width: 20px; flex: none; display: flex; justify-content: center; gap: 2px; }
.hgrip i { width: 1px; height: 5px; background: #c8c6c3; margin-top: 1px; }
.lbtn { height: 36px; flex: none; display: flex; align-items: center; margin-left: -2px; width: 34px; }
.lic { width: 24px; height: 24px; overflow: visible; }
.pressed { position: relative; }
.pressed::before {
  content: "";
  position: absolute;
  left: -2px; top: 1px; width: 31px; height: 33px;
  border: 1px solid #c4c2bf;
  border-radius: 4px;
  background: #e6e4e2;
  box-sizing: border-box;
}
.pressed .lic { position: relative; }
.flick { position: relative; }
.flick::before {
  content: "";
  position: absolute;
  left: 0; top: 6px; width: 24px; height: 24px;
  border: 1px solid #c8cbd2;
  border-radius: 4px;
  background: #e6e8ee;
  box-sizing: border-box;
}
.flick .lic { position: relative; }

.docks { width: 368px; flex: none; display: flex; flex-direction: column; }
.dhead { display: flex; justify-content: space-between; align-items: center; padding-left: 4px; color: #5a5750; }
.dh1 { height: 34px; width: 358px; padding-bottom: 8px; box-sizing: border-box; }
.dh2 { height: 50px; width: 358px; padding-top: 6px; box-sizing: border-box; }
.fl { width: 12px; height: 12px; flex: none; }
.tree {
  margin-left: 10px;
  width: 342px;
  height: 383px;
  box-sizing: border-box;
  flex: none;
  background: #fff;
  border: 1px solid #c4c1bc;
  padding-top: 1px;
}
.trow { height: 22px; display: flex; align-items: center; position: relative; white-space: nowrap; }
.trow.l0 { padding-left: 4px; }
.trow.l1 { padding-left: 27px; }
.trow.sel { background: linear-gradient(#e2e1df, #d4d3d1); }
.tbar { position: absolute; left: 10px; top: 1px; width: 2px; height: 20px; background: #dcd8d4; }
.arr-d { width: 0; height: 0; border: 6px solid transparent; border-top: 8px solid #5a4a44; border-bottom: 0; margin-right: 10px; margin-top: 1px; }
.arr-r { width: 0; height: 0; border: 6px solid transparent; border-left: 7px solid #5a4a44; border-right: 0; margin-right: 12px; margin-left: 0; }
.tck { width: 16px; height: 16px; flex: none; margin-right: 6px; }
.tic { width: 16px; height: 16px; flex: none; margin-right: 7px; }
.tlabel { font-size: 14.6px; }
.l0 .tic { margin-right: 6px; }

.propwrap { margin-left: 10px; display: flex; height: 383px; flex: none; }
.table {
  width: 326px;
  box-sizing: border-box;
  flex: none;
  border: 1px solid #c4c1bc;
  background: #fff;
  display: flex;
  flex-direction: column;
  overflow: hidden;
}
.thead { height: 24px; flex: none; display: flex; align-items: center; background: linear-gradient(#fff, #efeeed); border-bottom: 1px solid #e4e2df; }
.th1 { width: 114px; padding-left: 4px; box-sizing: border-box; border-right: 1px solid #d5d3d0; height: 100%; display: flex; align-items: center; }
.th2 { padding-left: 4px; }
.section { height: 19.5px; flex: none; background: #a9a9a9; color: #eceae8; padding-left: 1px; line-height: 18px; }
.prow { display: flex; align-items: center; flex: none; background: #fff; }
.prow.alt { background: #ededed; }
.h19 { height: 19px; }
.h22 { height: 22px; }
.h27 { height: 27px; }
.h53 { height: 53px; }
.pk { width: 115px; flex: none; padding-left: 3px; padding-bottom: 2px; box-sizing: border-box; white-space: nowrap; }
.pv { flex: 1; min-width: 0; display: flex; align-items: center; padding-left: 3px; padding-bottom: 2px; white-space: nowrap; }
.pck { width: 16px; height: 16px; margin-left: 2px; margin-top: 2px; }
.multi { display: flex; flex-direction: column; line-height: 17px; }
.combo {
  width: 207px;
  height: 24px;
  margin-left: -2px;
  margin-top: 2px;
  box-sizing: border-box;
  border: 1px solid #b6b3af;
  border-radius: 4px;
  background: linear-gradient(#fff, #ecebe9);
  display: flex;
  align-items: center;
  padding-left: 4px;
  position: relative;
}
.spin { position: absolute; right: 5px; top: 5px; width: 0; height: 0; border-left: 3px solid transparent; border-right: 3px solid transparent; border-bottom: 4px solid #555; }
.spin::after { content: ""; position: absolute; left: -3px; top: 7px; width: 0; height: 0; border-left: 3px solid transparent; border-right: 3px solid transparent; border-top: 4px solid #555; }

.sbar {
  margin-left: 4px;
  width: 12px;
  box-sizing: border-box;
  flex: none;
  border: 1px solid #cfcdca;
  border-radius: 6px;
  background: #e4e2e0;
  display: flex;
  flex-direction: column;
  align-items: center;
}
.sbar .up, .sbar .dn { flex: none; width: 0; height: 0; border-left: 3px solid transparent; border-right: 3px solid transparent; margin: 4px 0; }
.sbar .up { border-bottom: 3px solid #8a8a8a; }
.sbar .dn { border-top: 3px solid #8a8a8a; margin-top: auto; }
.thumb {
  width: 12px;
  box-sizing: border-box;
  border: 1px solid #b8b6b3;
  border-radius: 6px;
  background: linear-gradient(90deg, #fdfdfd, #efeeec);
  display: flex;
  flex-direction: column;
  align-items: center;
  justify-content: center;
  gap: 2px;
  flex: none;
}
.thumb b { width: 5px; height: 1px; background: #aaa; display: block; }
.th-p { height: 214px; }
.th-c { height: 33px; margin-top: 25px; }
.track { width: 12px; flex: 1; background: linear-gradient(#dcdbd9, #e8e7e5); }

.win {
  width: 1337px;
  flex: none;
  box-sizing: border-box;
  border: 3px solid #a8a6a2;
  border-top: 1px solid #a8a6a2;
  border-radius: 4px 4px 0 0;
  border-bottom-color: #a3a19d;
  display: flex;
  flex-direction: column;
  background: #f2f1f0;
}
.wtitle {
  height: 23px;
  flex: none;
  display: flex;
  align-items: center;
  background: linear-gradient(#fff 0 11px, #f1f0ef 11px);
  padding: 0 3px 0 6px;
}
.cc { color: #1f6da8; font-size: 17px; font-weight: 700; width: 20px; font-family: "DejaVu Sans", sans-serif; }
.wname { flex: 1; text-align: center; font-weight: 700; font-size: 14px; }
.wb { width: 18px; height: 18px; margin-left: 2px; box-sizing: border-box; border: 1px solid #c4c2bf; border-radius: 4px; background: linear-gradient(#fff, #efeeec); display: flex; }
.wb svg { width: 16px; height: 16px; }
.gl { flex: 1; background: linear-gradient(#0a6699, #000); overflow: hidden; }
.scene { display: block; }
.scale { font-size: 12px; fill: #c8c8c8; text-anchor: middle; font-family: "Noto Sans", sans-serif; }

.rtb { flex: 1; min-width: 0; display: flex; flex-direction: column; align-items: flex-start; padding-top: 3px; box-sizing: border-box; overflow: hidden; white-space: nowrap; }
.rtb .hgrip { margin-left: 43px; }
.rtb .rh { margin-top: 2px; margin-bottom: 3px; }
.rbtn { height: 36px; flex: none; display: flex; align-items: center; margin-left: 40px; width: 26px; }
.ric { width: 26px; height: 24px; overflow: visible; }
.blur { height: 26px; line-height: 26px; flex: none; margin-left: 10px; margin-top: 1px; color: #4a4a4a; }

.console { height: 135px; flex: none; display: flex; flex-direction: column; }
.chead { height: 41px; padding-left: 36px; padding-right: 85px; padding-bottom: 3px; box-sizing: border-box; flex: none; }
.cbtns { display: flex; gap: 5px; }
.cbody { display: flex; margin-left: 42px; height: 84px; flex: none; }
.clog { width: 1671px; box-sizing: border-box; flex: none; border: 1px solid #c4c1bc; background: #fff; }
.citem { background: #ededed; height: 70px; padding: 2px 0 0 3px; box-sizing: border-box; line-height: 17px; font-size: 14.65px; color: #1c1c1c; }
.short { margin-left: 3px; width: 12px; }
.status { flex: 1; border-top: 1px solid #dcdad7; }
</style>
